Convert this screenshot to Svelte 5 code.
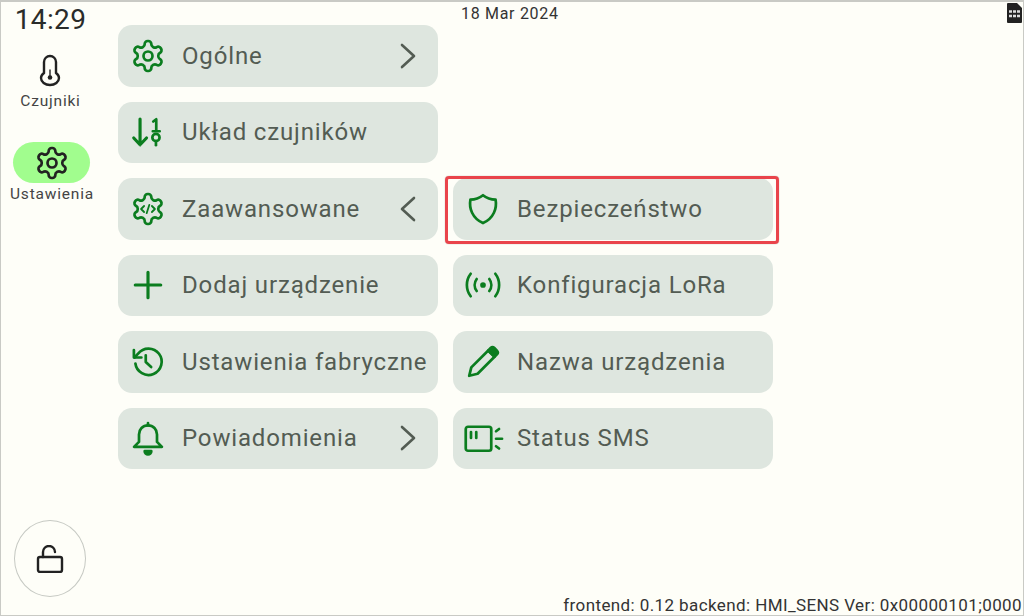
<script lang="ts">
	const gear = `<path d="M12.22 2h-.44a2 2 0 0 0-2 2v.18a2 2 0 0 1-1 1.73l-.43.25a2 2 0 0 1-2 0l-.15-.08a2 2 0 0 0-2.73.73l-.22.38a2 2 0 0 0 .73 2.73l.15.1a2 2 0 0 1 1 1.72v.51a2 2 0 0 1-1 1.74l-.15.09a2 2 0 0 0-.73 2.73l.22.38a2 2 0 0 0 2.73.73l.15-.08a2 2 0 0 1 2 0l.43.25a2 2 0 0 1 1 1.73V20a2 2 0 0 0 2 2h.44a2 2 0 0 0 2-2v-.18a2 2 0 0 1 1-1.73l.43-.25a2 2 0 0 1 2 0l.15.08a2 2 0 0 0 2.73-.73l.22-.39a2 2 0 0 0-.73-2.73l-.15-.08a2 2 0 0 1-1-1.74v-.5a2 2 0 0 1 1-1.74l.15-.09a2 2 0 0 0 .73-2.73l-.22-.38a2 2 0 0 0-2.73-.73l-.15.08a2 2 0 0 1-2 0l-.43-.25a2 2 0 0 1-1-1.73V4a2 2 0 0 0-2-2z"/>`;

	const icons = {
		gear: gear + `<circle cx="12" cy="12" r="3"/>`,
		sort: `<path d="M6.700 3.300v17M2.500 16l4.200 4.500L11 16" stroke-width="2.100"/><path d="M15.500 5l2-1.500v8M15.200 11.500h4.600"/><circle cx="17.300" cy="15.600" r="2.400"/><path d="M17.300 18v2.800"/>`,
		code: gear + `<path d="M9.400 10l-2 2 2 2M14.600 10l2 2-2 2M12.900 9.200l-1.800 5.600" stroke-width="1.200"/>`,
		plus: `<path d="M12 3.500v17M3.500 12h17" stroke-width="2.100"/>`,
		history: `<path d="M3.600 13a8.800 8.800 0 1 0 1.800-6.600L3 9"/><path d="M2.600 4v5h5"/><path d="M10.500 7.500v4.500l3.600 3.400"/>`,
		bell: `<path d="M12 3.600c-3.500 0-6 2.600-6 6v5l-3.300 3.300h18.600L18 14.600v-5c0-3.400-2.500-6-6-6z"/><path d="M12 2v1.600"/><path d="M9.800 20.800h4.400a2.200 2.200 0 0 1-4.400 0z" fill="currentColor"/>`,
		shield: `<path d="M12 2.800c2.400 1.900 5.200 2.900 8.400 3 1 5.600-1.200 12.400-8.400 15.600C4.800 18.200 2.600 11.400 3.600 5.800c3.200-.1 6-1.100 8.400-3z"/>`,
		radio: `<path d="M3.800 19.500C.4 15.200.4 8.800 3.800 4.500"/><path d="M7.800 16c-1.800-2.400-1.800-5.600 0-8"/><circle cx="12" cy="12" r="1" fill="currentColor"/><path d="M16.200 8c1.800 2.400 1.800 5.600 0 8"/><path d="M20.200 4.500c3.400 4.300 3.400 10.700 0 15"/>`,
		pencil: `<path d="M2.800 21.200l1.400-5.600L15.500 4.300l4.200 4.200L8.400 19.800z"/><path d="M15.500 4.300l1.600-1.600a1.800 1.800 0 0 1 2.500 0l1.700 1.700a1.800 1.800 0 0 1 0 2.500l-1.600 1.600z" fill="currentColor"/>`,
		sms: `<rect x="0.500" y="4.500" width="17" height="16" rx="1.500"/><path d="M4 8v4M7.500 8v4"/><path d="M20.700 7.500l2-1.500M20.700 12.500h4M20.700 17.500l2 1.500" stroke-linecap="round"/>`
	};

	const left = [
		{ label: 'Ogólne', icon: icons.gear, chevron: 'right' },
		{ label: 'Układ czujników', icon: icons.sort },
		{ label: 'Zaawansowane', icon: icons.code, chevron: 'left' },
		{ label: 'Dodaj urządzenie', icon: icons.plus },
		{ label: 'Ustawienia fabryczne', icon: icons.history },
		{ label: 'Powiadomienia', icon: icons.bell, chevron: 'right' }
	];

	const right = [
		{ label: 'Bezpieczeństwo', icon: icons.shield, highlighted: true },
		{ label: 'Konfiguracja LoRa', icon: icons.radio },
		{ label: 'Nazwa urządzenia', icon: icons.pencil },
		{ label: 'Status SMS', icon: icons.sms }
	];
</script>

{#snippet card(item)}
	<button class="card">
		<svg class="icon" viewBox="0 0 24 24" fill="none" stroke="currentColor" stroke-width="1.800" stroke-linecap="round" stroke-linejoin="round" aria-hidden="true">
			{@html item.icon}
		</svg>
		<span class="label">{item.label}</span>
		{#if item.chevron}
			<svg class="chevron" viewBox="0 0 16 26" fill="none" stroke="currentColor" stroke-width="2.600" stroke-linecap="round" stroke-linejoin="round" aria-hidden="true">
				<path d={item.chevron === 'right' ? 'M2 2l12 11L2 24' : 'M14 2L2 13l12 11'} />
			</svg>
		{/if}
		{#if item.highlighted}
			<span class="highlight"></span>
		{/if}
	</button>
{/snippet}

<div class="screen">
	<aside class="rail">
		<div class="clock">14:29</div>
		<div class="nav-item sensors">
			<svg class="nav-icon" viewBox="0 0 36 36" fill="none" stroke="currentColor" stroke-width="2.400" stroke-linecap="round" aria-hidden="true">
				<path d="M12 10a6 6 0 0 1 12 0v11c2 1.500 3 3.500 3 5a9 7 0 0 1-18 0c0-1.500 1-3.500 3-5z" />
				<path d="M18 18v7" stroke-width="1.400" />
				<circle cx="18" cy="25.500" r="2.300" fill="currentColor" stroke="none" />
			</svg>
			<span>Czujniki</span>
		</div>
		<div class="nav-item settings">
			<span class="pill">
				<svg class="nav-icon" viewBox="0 0 24 24" fill="none" stroke="currentColor" stroke-width="1.800" stroke-linecap="round" stroke-linejoin="round" aria-hidden="true">
					{@html icons.gear}
				</svg>
			</span>
			<span>Ustawienia</span>
		</div>
		<button class="lock" aria-label="Odblokuj">
			<svg viewBox="0 0 28 28" fill="none" stroke="currentColor" stroke-width="2.400" stroke-linecap="round" stroke-linejoin="round" aria-hidden="true">
				<rect x="2" y="12" width="24" height="15" rx="2" />
				<path d="M7 12V7a6 6 0 0 1 12 0" />
			</svg>
		</button>
	</aside>

	<main class="main">
		<header class="status">
			<span class="date">18 Mar 2024</span>
			<svg class="sim" viewBox="0 0 15 20" aria-hidden="true">
				<path d="M1 0h9l5 5v14a1 1 0 0 1-1 1H1a1 1 0 0 1-1-1V1a1 1 0 0 1 1-1z" fill="#222" />
				<path d="M2 8.500h11M2 13h11" stroke="#ddd" stroke-width="2.400" />
				<path d="M5.500 7v8M9.500 7v8" stroke="#222" stroke-width="1" />
			</svg>
		</header>
		<div class="columns">
			<div class="column">
				{#each left as item (item.label)}
					{@render card(item)}
				{/each}
			</div>
			<div class="column offset">
				{#each right as item (item.label)}
					{@render card(item)}
				{/each}
			</div>
		</div>
		<footer class="versions">frontend: 0.12 backend: HMI_SENS Ver: 0x00000101;0000</footer>
	</main>
</div>

<style>
	:global(body) {
		margin: 0;
		background: #fefef8;
	}

	.screen {
		box-sizing: border-box;
		width: 1024px;
		height: 616px;
		display: flex;
		overflow: hidden;
		background: #fefef8;
		border: 1px solid #c9cac5;
		border-top-width: 2px;
		font-family: Roboto, 'Liberation Sans', sans-serif;
		color: #222;
	}

	.rail {
		width: 99px;
		flex: none;
		display: flex;
		flex-direction: column;
		align-items: center;
		padding-bottom: 18px;
		box-sizing: border-box;
	}

	.clock {
		font-size: 28px;
		line-height: 34px;
		margin-top: 1px;
		letter-spacing: 0.4px;
		color: #2a2c2a;
	}

	.nav-item {
		display: flex;
		flex-direction: column;
		align-items: center;
		font-size: 15.500px;
		line-height: 18px;
		letter-spacing: 0.800px;
		color: #444;
	}

	.nav-icon {
		width: 36px;
		height: 36px;
		color: #222;
	}

	.sensors {
		margin-top: 15px;
		gap: 4px;
	}

	.settings {
		margin-top: 32px;
		margin-left: 3px;
		gap: 2px;
	}

	.pill {
		width: 77px;
		height: 41px;
		border-radius: 21px;
		background: #a1fd8e;
		display: flex;
		align-items: center;
		justify-content: center;
	}

	.lock {
		margin-top: auto;
		margin-right: 2px;
		width: 72px;
		height: 77px;
		border-radius: 50%;
		border: 1.500px solid #c6c9c3;
		background: transparent;
		padding: 0;
		display: flex;
		align-items: center;
		justify-content: center;
		color: #222;
	}

	.lock svg {
		width: 28px;
		height: 28px;
	}

	.main {
		flex: 1;
		min-width: 0;
		display: flex;
		flex-direction: column;
	}

	.status {
		height: 23px;
		flex: none;
		display: flex;
		justify-content: space-between;
		align-items: flex-start;
		padding-left: 361px;
		padding-right: 1px;
	}

	.date {
		margin-top: 2px;
		font-size: 16px;
		line-height: 19px;
		letter-spacing: 0.700px;
		color: #333;
	}

	.sim {
		width: 15px;
		height: 20px;
		margin-top: 1px;
	}

	.columns {
		display: flex;
		gap: 15px;
		padding-left: 18px;
	}

	.column {
		width: 320px;
		display: flex;
		flex-direction: column;
		gap: 15px;
	}

	.offset {
		margin-top: 153px;
	}

	.card {
		position: relative;
		height: 61.500px;
		border: none;
		border-radius: 14px;
		background: #dee6df;
		display: flex;
		align-items: center;
		padding: 0 12px;
		gap: 16px;
		font: inherit;
		text-align: left;
		color: #0b7d1f;
	}

	.icon {
		width: 36px;
		height: 36px;
		flex: none;
		overflow: visible;
	}

	.label {
		flex: 1;
		font-size: 24px;
		letter-spacing: 0.850px;
		white-space: nowrap;
		color: #535c53;
	}

	.chevron {
		width: 16px;
		height: 26px;
		flex: none;
		margin-right: 10px;
		color: #535c53;
	}

	.highlight {
		position: absolute;
		inset: -2px -6px -4px -8px;
		border: 3px solid #e9444b;
		border-radius: 4px;
		box-shadow: 0 0 1px #888;
	}

	.versions {
		margin-top: auto;
		text-align: right;
		padding-right: 1px;
		padding-bottom: 1px;
		font-size: 17px;
		line-height: 18px;
		letter-spacing: 0.400px;
		white-space: nowrap;
		color: #333;
	}
</style>
